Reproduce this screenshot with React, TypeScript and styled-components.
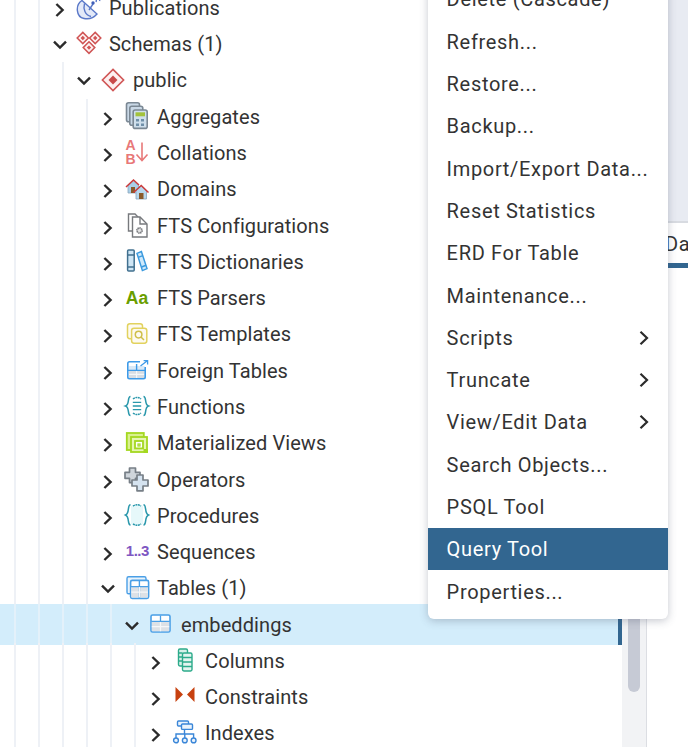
import styled, { createGlobalStyle } from "styled-components";
import { ReactNode } from "react";

const GlobalStyle = createGlobalStyle`
  html, body {
    margin: 0;
    padding: 0;
    background: #fff;
  }
  body {
    font-family: Roboto, "Liberation Sans", sans-serif;
    color: #333;
  }
`;

// tree icons, drawn on a 26 x 26 box
const icons: Record<string, ReactNode> = {
  publications: (
    <g fill="none" stroke="#5a78c8" strokeWidth="1.4">
      <path d="M6 5.5 C-1 10 0 22 8 23.5 C13 24.5 18 22.5 21 19 Z" fill="#e3e9f8" />
      <path d="M8.5 8.5 C7 14 9 20 15 21.5" />
      <path d="M13 15 L17 9" />
      <circle cx="17" cy="8" r="1.7" fill="#3f5fb8" stroke="none" />
      <path d="M20 7 C20.5 6 20.4 5 20 4 M23.5 6 C24 4.5 24 3 23.4 1.5" strokeDasharray="2 1" />
    </g>
  ),
  schemas: (
    <g fill="#fdf2f2" stroke="#d05555" strokeWidth="1.5">
      <path d="M6.8 1.4 L12.4 7 L6.8 12.6 L1.2 7 Z" />
      <path d="M19.2 1.4 L24.8 7 L19.2 12.6 L13.6 7 Z" />
      <path d="M13 10.8 L18.8 16.6 L13 22.4 L7.2 16.6 Z" />
      <path d="M6.8 4.8 L9 7 L6.8 9.2 L4.6 7 Z M19.2 4.8 L21.4 7 L19.2 9.2 L17 7 Z M13 14.4 L15.2 16.6 L13 18.8 L10.8 16.6 Z" fill="#d05555" stroke="none" />
    </g>
  ),
  schema: (
    <g>
      <path d="M13 2.4 L23.6 13 L13 23.6 L2.4 13 Z" fill="#fdf0f0" stroke="#d05555" strokeWidth="1.6" />
      <path d="M13 8.5 L17.5 13 L13 17.5 L8.5 13 Z" fill="#c94a4a" />
    </g>
  ),
  aggregates: (
    <g stroke="#7b8894" strokeWidth="1.6">
      <rect x="2.5" y="-1.2" width="13" height="19" rx="2" fill="#c9d8e6" />
      <rect x="5.8" y="2.2" width="13" height="19" rx="2" fill="#c9d8e6" />
      <rect x="9.2" y="6" width="14" height="18.4" rx="2" fill="#cfdfec" />
      <rect x="11.5" y="8.3" width="9.5" height="4" fill="#a3c23c" stroke="none" />
      <path d="M12 15 h3 v2.6 h-3 z M17 15 h3 v2.6 h-3 z M12 19.4 h3 v2.6 h-3 z M17 19.4 h3 v2.6 h-3 z" fill="#6f8fa8" stroke="none" />
    </g>
  ),
  collations: (
    <g fill="#e87878">
      <text x="1.4" y="10.4" fontFamily="Liberation Sans" fontWeight="700" fontSize="14">A</text>
      <text x="1.6" y="23.6" fontFamily="Liberation Sans" fontWeight="700" fontSize="14">B</text>
      <path d="M18 2.5 V20 M12.5 14.5 L18 20.5 L23.5 14.5" fill="none" stroke="#e87878" strokeWidth="1.6" />
    </g>
  ),
  domains: (
    <g>
      <path d="M4 10 V17 H15 V10 L9.5 5 Z" fill="#a9cfe8" stroke="#8aa6bc" strokeWidth="0.8" />
      <rect x="7" y="11" width="4" height="6" fill="#8a5a2b" />
      <path d="M2 11 L9.5 4 L15 9" fill="none" stroke="#cc3b3b" strokeWidth="1.5" />
      <path d="M12 15 V23 H22.5 V15 L17.2 10 Z" fill="#b8d8ee" stroke="#8aa6bc" strokeWidth="0.8" />
      <rect x="15" y="17" width="4.5" height="6" fill="#8a5a2b" />
      <path d="M9.5 16.5 L17.2 9.5 L24.5 16.5" fill="none" stroke="#cc3b3b" strokeWidth="1.5" />
    </g>
  ),
  ftsConfig: (
    <g fill="#fff" stroke="#77797d" strokeWidth="1.4">
      <path d="M4.5 1 H11 L14 4 V18 H4.5 Z" />
      <path d="M8.5 4 H16 L23 11 V24 H8.5 Z" />
      <path d="M16 4 V11 H23" fill="none" />
      <circle cx="15.5" cy="17.5" r="2.5" fill="#e4e4e4" strokeWidth="1.8" strokeDasharray="1.3 .6" />
    </g>
  ),
  ftsDict: (
    <g strokeWidth="1.5">
      <rect x="3.6" y="1" width="6.6" height="21" rx="1" fill="#cfe6f5" stroke="#41708f" />
      <path d="M3.6 6 H10.2 M3.6 18 H10.2" stroke="#41708f" />
      <path d="M13 4.4 L17.4 2.6 L23 19.6 L18.4 21.6 Z" fill="#cfe9fb" stroke="#3b9ade" />
      <path d="M14.2 8.4 L18.8 6.6 M17.6 18 L22 16.2" stroke="#3b9ade" />
    </g>
  ),
  ftsParser: (
    <text x="1.8" y="19.4" fill="#6a9e00" fontFamily="Liberation Sans" fontWeight="700" fontSize="17.5">Aa</text>
  ),
  ftsTemplate: (
    <g fill="#fdfaf0" stroke="#e2d25e" strokeWidth="1.5">
      <rect x="3.5" y="2.7" width="15" height="15" rx="2.4" />
      <rect x="7.6" y="7.2" width="15.2" height="15" rx="2.4" />
      <circle cx="14.6" cy="13.6" r="3.3" fill="none" stroke="#cfbf4a" />
      <path d="M17 16 L20 19" stroke="#cfbf4a" />
    </g>
  ),
  foreignTable: (
    <g>
      <path d="M5 12.4 H20.6 V20 H5 Z" fill="#d8dde3" />
      <path d="M5 8 H20.6 V12.4 H5 Z" fill="#d9e9f7" />
      <path d="M4 16.4 H21 M12.6 12.4 V20.4" stroke="#f4f6f8" strokeWidth="1.2" />
      <path d="M16 3.8 H5.5 Q3.8 3.8 3.8 5.5 V19 Q3.8 20.7 5.5 20.7 H19.5 Q21.2 20.7 21.2 19 V9" fill="none" stroke="#3d9ae8" strokeWidth="1.6" />
      <path d="M4 12.4 H21 M12.6 6 V12.4" stroke="#3d9ae8" strokeWidth="1.4" />
      <path d="M16.5 8 L23 3 M19.6 2.6 H23.6 V6.6" fill="none" stroke="#3d9ae8" strokeWidth="1.3" />
    </g>
  ),
  functions: (
    <g fill="none" stroke="#2a98ac" strokeWidth="1.5">
      <path d="M6.5 2.5 C3 2.5 6 10.5 1.5 12 C6 13.5 3 21.5 6.5 21.5" />
      <path d="M19.5 2.5 C23 2.5 20 10.5 24.5 12 C20 13.5 23 21.5 19.5 21.5" />
      <path d="M9 5 Q13 1.8 17 5 M9 19 Q13 22.2 17 19" strokeDasharray="2 .6" />
      <path d="M8.8 8.4 H17.2 M8.8 12 H17.2 M8.8 15.6 H17.2" strokeWidth="1.4" />
    </g>
  ),
  matView: (
    <g fill="#d9f08f" stroke="#a4d820" strokeWidth="1.8">
      <rect x="2.8" y="3" width="17" height="17" />
      <rect x="7" y="7" width="16" height="15" fill="#e6f6b2" />
      <rect x="11" y="11" width="8" height="7.4" fill="#fff" />
      <rect x="14" y="14" width="2" height="2" fill="none" strokeWidth="1.2" />
      <rect x="19.5" y="19" width="4.5" height="4" fill="#a4d820" stroke="none" />
    </g>
  ),
  operators: (
    <g stroke="#777f87" strokeWidth="1.7" strokeLinejoin="round">
      <path d="M5.5 1 H11.5 V5.3 H16 V11.3 H11.5 V15.6 H5.5 V11.3 H1 V5.3 H5.5 Z" fill="#cfd5db" />
      <path d="M13 8 H19 V13 H24 V19 H19 V23.8 H13 V19 H8 V13 H13 Z" fill="#d5e3f0" />
    </g>
  ),
  procedures: (
    <g fill="none" stroke="#2a98ac" strokeWidth="1.5">
      <path d="M7 3 Q13 .5 19 3 V21 Q13 23.5 7 21 Z" fill="#e6f8fa" stroke="none" />
      <path d="M6.5 1.8 C3 1.8 6 10 1.5 12 C6 14 3 22 6.5 22" />
      <path d="M19.5 1.8 C23 1.8 20 10 24.5 12 C20 14 23 22 19.5 22" />
      <path d="M9 3 Q13 .5 17 3 M9 21 Q13 23.5 17 21" strokeDasharray="2 .6" />
    </g>
  ),
  sequences: (
    <text x="1.8" y="17.4" fill="#7e57c2" fontFamily="Liberation Sans" fontWeight="700" fontSize="15" letterSpacing="-0.5">1..3</text>
  ),
  tables: (
    <g>
      <rect x="3" y="1.8" width="19" height="17" rx="1.6" fill="#eaf4fc" stroke="#4a9fe6" strokeWidth="1.4" />
      <rect x="6.6" y="5.4" width="18" height="18" rx="1.6" fill="#fff" stroke="#4a9fe6" strokeWidth="1.6" />
      <path d="M7.4 12 H23.8 V22.6 H7.4 Z" fill="#dde1e6" />
      <path d="M7 11.6 H24 M15.4 6 V23" stroke="#4a9fe6" strokeWidth="1.4" />
      <path d="M7.4 17.2 H23.8 M15.4 12 V22.6" stroke="#f6f7f9" strokeWidth="1.2" />
    </g>
  ),
  table: (
    <g>
      <rect x="3" y="3" width="19" height="17" rx="1.6" fill="#fff" stroke="#4a9fe6" strokeWidth="1.6" />
      <path d="M3.8 10 H21.2 V19.2 H3.8 Z" fill="#dde1e6" />
      <path d="M3.4 9.4 H21.6 M12.5 3.6 V9.4" stroke="#4a9fe6" strokeWidth="1.3" />
      <path d="M3.8 14.6 H21.2 M12.5 10 V19.2" stroke="#f6f7f9" strokeWidth="1.2" />
    </g>
  ),
  columns: (
    <g stroke="#2cab8b" strokeWidth="1.4">
      <rect x="6.5" y="1" width="9" height="17" rx="1.4" fill="#d8f0e8" />
      <rect x="10.5" y="5" width="9.5" height="18" rx="1.4" fill="#e4f5ef" />
      <path d="M6.5 5 H10.5 M6.5 9 H10.5 M6.5 13 H10.5 M10.5 9.5 H20 M10.5 14 H20 M10.5 18.5 H20" />
    </g>
  ),
  constraints: (
    <g fill="#c7410f">
      <path d="M3.5 3 L11 10.5 L3.5 18 Z" />
      <path d="M22.5 3 L15 10.5 L22.5 18 Z" />
    </g>
  ),
  indexes: (
    <g fill="#eaf3fc" stroke="#3a86d8" strokeWidth="1.4">
      <rect x="5.5" y="1" width="11" height="5" rx="1" />
      <rect x="9.5" y="4" width="11" height="5.4" rx="1" />
      <path d="M12.5 9.4 V14 M4 18 V14 H21.6 V18 M12.8 14 V18" fill="none" />
      <circle cx="4" cy="20.4" r="2.4" />
      <circle cx="12.8" cy="20.4" r="2.4" />
      <circle cx="21.6" cy="20.4" r="2.4" />
    </g>
  ),
};

type TreeNode = {
  label: string;
  icon: string;
  depth: number;
  open?: boolean;
  selected?: boolean;
};

const nodes: TreeNode[] = [
  { label: "Publications", icon: "publications", depth: 2 },
  { label: "Schemas (1)", icon: "schemas", depth: 2, open: true },
  { label: "public", icon: "schema", depth: 3, open: true },
  { label: "Aggregates", icon: "aggregates", depth: 4 },
  { label: "Collations", icon: "collations", depth: 4 },
  { label: "Domains", icon: "domains", depth: 4 },
  { label: "FTS Configurations", icon: "ftsConfig", depth: 4 },
  { label: "FTS Dictionaries", icon: "ftsDict", depth: 4 },
  { label: "FTS Parsers", icon: "ftsParser", depth: 4 },
  { label: "FTS Templates", icon: "ftsTemplate", depth: 4 },
  { label: "Foreign Tables", icon: "foreignTable", depth: 4 },
  { label: "Functions", icon: "functions", depth: 4 },
  { label: "Materialized Views", icon: "matView", depth: 4 },
  { label: "Operators", icon: "operators", depth: 4 },
  { label: "Procedures", icon: "procedures", depth: 4 },
  { label: "Sequences", icon: "sequences", depth: 4 },
  { label: "Tables (1)", icon: "tables", depth: 4, open: true },
  { label: "embeddings", icon: "table", depth: 5, open: true, selected: true },
  { label: "Columns", icon: "columns", depth: 6 },
  { label: "Constraints", icon: "constraints", depth: 6 },
  { label: "Indexes", icon: "indexes", depth: 6 },
];

const menuItems: { label: string; submenu?: boolean; active?: boolean }[] = [
  { label: "Delete (Cascade)" },
  { label: "Refresh..." },
  { label: "Restore..." },
  { label: "Backup..." },
  { label: "Import/Export Data..." },
  { label: "Reset Statistics" },
  { label: "ERD For Table" },
  { label: "Maintenance..." },
  { label: "Scripts", submenu: true },
  { label: "Truncate", submenu: true },
  { label: "View/Edit Data", submenu: true },
  { label: "Search Objects..." },
  { label: "PSQL Tool" },
  { label: "Query Tool", active: true },
  { label: "Properties..." },
];

const Chevron = ({ open }: { open?: boolean }) => (
  <ChevronBox>
    <svg width="24" height="24" viewBox="0 0 24 24" fill="none" stroke="#2b2b2b" strokeWidth="2.4">
      {open ? <path d="M6 9.6 L12 15.6 L18 9.6" /> : <path d="M8.4 8 L14.6 14 L8.4 20" />}
    </svg>
  </ChevronBox>
);

const App = () => {
  return (
    <Page>
      <GlobalStyle />
      <TreePanel>
        <TreeList>
          {nodes.map((node) => (
            <Row key={node.label} $selected={node.selected}>
              {Array.from({ length: node.depth }).map((_, i) => (
                <Guide key={i} $selected={node.selected} />
              ))}
              <Chevron open={node.open} />
              <IconBox viewBox="0 0 26 26">{icons[node.icon]}</IconBox>
              <Label>{node.label}</Label>
            </Row>
          ))}
        </TreeList>
      </TreePanel>
      <ScrollTrack>
        <ScrollThumb />
      </ScrollTrack>
      <MainPane>
        <TopArea />
        <TabBar>
          <Tab>Data Output</Tab>
        </TabBar>
      </MainPane>
      <ContextMenu>
        {menuItems.map((item) => (
          <MenuItem key={item.label} $active={item.active}>
            {item.label}
            {item.submenu && (
              <svg width="14" height="16" viewBox="0 0 14 16" fill="none" stroke="#2b2b2b" strokeWidth="2.2">
                <path d="M3.5 1.8 L10 8 L3.5 14.2" />
              </svg>
            )}
          </MenuItem>
        ))}
      </ContextMenu>
    </Page>
  );
};

export default App;

const Page = styled.div`
  position: relative;
  display: flex;
  width: 688px;
  height: 747px;
  overflow: hidden;
  background: #fff;
`;

const TreePanel = styled.div`
  width: 622px;
  flex: none;
  overflow: hidden;
`;

// the tree is scrolled: its first row is cut by the top edge
const TreeList = styled.div`
  margin-top: -10.3px;
  padding-left: 14px;
`;

const Row = styled.div<{ $selected?: boolean }>`
  display: flex;
  align-items: center;
  height: ${({ $selected }) => ($selected ? "40.29px" : "36.29px")};
  margin: ${({ $selected }) => ($selected ? "-2px 0 -2px -14px" : "0 0 0 -14px")};
  padding-left: 14px;
  box-sizing: border-box;
  position: relative;
  background: ${({ $selected }) => ($selected ? "#d3edfb" : "transparent")};
  border-right: 4px solid ${({ $selected }) => ($selected ? "#326690" : "transparent")};
`;

const Guide = styled.span<{ $selected?: boolean }>`
  flex: none;
  align-self: stretch;
  width: 24.05px;
  box-sizing: border-box;
  border-left: 2px solid ${({ $selected }) => ($selected ? "#e3f1fa" : "#eef1f6")};
`;

const ChevronBox = styled.span`
  flex: none;
  display: flex;
  width: 24px;
  height: 24px;
  margin-left: -14.2px;
`;

const IconBox = styled.svg`
  flex: none;
  width: 26px;
  height: 26px;
  margin-left: 4px;
  overflow: visible;
`;

const Label = styled.span`
  margin-left: 7px;
  font-size: 20px;
  letter-spacing: 0.08px;
  white-space: nowrap;
  color: #333;
`;

const ScrollTrack = styled.div`
  width: 24px;
  flex: none;
  box-sizing: border-box;
  padding: 300px 6px 0;
  background: #f2f3f5;
`;

const ScrollThumb = styled.div`
  height: 392px;
  border-radius: 6px;
  background: #c6cad5;
`;

const MainPane = styled.div`
  flex: 1;
  display: flex;
  flex-direction: column;
  min-width: 0;
  border-left: 1px solid #dcdee3;
`;

const TopArea = styled.div`
  height: 223px;
  flex: none;
  background: #e8ebf2;
  border-bottom: 2px solid #d8dbe1;
  box-sizing: border-box;
`;

const TabBar = styled.div`
  height: 45px;
  flex: none;
  overflow: hidden;
  background: #fff;
`;

const Tab = styled.div`
  height: 45px;
  box-sizing: border-box;
  padding: 9px 0 0 18px;
  font-size: 20px;
  letter-spacing: 0.7px;
  white-space: nowrap;
  color: #333;
  border-bottom: 5px solid #326690;
`;

const ContextMenu = styled.div`
  position: absolute;
  left: 428px;
  top: -21.7px;
  width: 240px;
  padding-bottom: 6.3px;
  background: #fff;
  border-radius: 0 0 6px 6px;
  box-shadow: 0 2px 8px rgba(70, 75, 100, 0.3);
`;

const MenuItem = styled.div<{ $active?: boolean }>`
  display: flex;
  align-items: center;
  justify-content: space-between;
  height: 42.3px;
  padding: 0 17px 0 18.6px;
  font-size: 20px;
  letter-spacing: 0.68px;
  color: ${({ $active }) => ($active ? "#fff" : "#333")};
  background: ${({ $active }) => ($active ? "#326690" : "transparent")};
`;
